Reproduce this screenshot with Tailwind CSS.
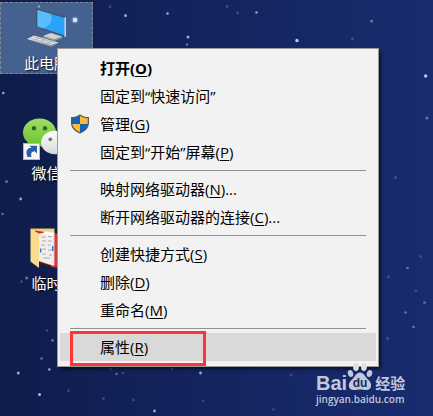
<!DOCTYPE html>
<html lang="zh-CN">
<head>
  <meta charset="UTF-8" />
  <meta name="viewport" content="width=device-width, initial-scale=1" />
  <title>桌面</title>
  <script src="https://cdn.jsdelivr.net/npm/@tailwindcss/browser@4"></script>
</head>
<body class="font-['Open_Sans','Noto_Sans_CJK_SC',sans-serif] text-[15px] text-black">
  <main class="relative min-h-screen overflow-hidden bg-linear-to-r from-[#0f1c4b] via-[#14245f] to-[#182c6e] pt-0.5">

    <!-- stars -->
    <svg class="absolute top-0 left-0" width="433" height="416" viewBox="0 0 433 416" fill="#a9c4ee" aria-hidden="true">
      <g opacity=".85">
        <circle cx="125.500" cy="15.500" r="1.500" />
        <circle cx="167.500" cy="13.500" r="1.300" />
        <circle cx="188" cy="37" r="1.500" />
        <circle cx="256.500" cy="12.500" r="1.200" />
        <circle cx="297" cy="40.500" r="1.700" fill="#d3e6ff" />
        <circle cx="425.700" cy="76" r="1.700" fill="#d3e6ff" />
        <circle cx="39.500" cy="394.500" r="1.500" fill="#c3dcff" />
        <circle cx="18.300" cy="373" r="1.500" />
        <circle cx="49.300" cy="369.500" r="1.300" />
        <circle cx="154.500" cy="411" r="1.400" />
        <circle cx="200.500" cy="373" r="1.400" />
        <circle cx="3.300" cy="93" r="1.300" />
        <circle cx="20.700" cy="199" r="1.400" />
      </g>
      <g opacity=".5">
        <circle cx="371.700" cy="21" r="1.500" />
        <circle cx="427" cy="118" r="1.500" />
        <circle cx="187" cy="44.500" r="1.200" />
        <circle cx="41.500" cy="358.500" r="1.300" />
        <circle cx="52.500" cy="340.500" r="1.400" />
        <circle cx="6.500" cy="181.500" r="1.500" />
        <circle cx="26.700" cy="278" r="1.500" />
        <circle cx="2.500" cy="214" r="1.300" />
        <circle cx="116.500" cy="374" r="1.200" />
        <circle cx="407.500" cy="268" r="1.300" />
        <circle cx="424.500" cy="302.500" r="1.300" />
        <circle cx="405.500" cy="312.500" r="1.200" />
        <circle cx="413.500" cy="327" r="1.300" />
      </g>
      <g opacity=".25">
        <circle cx="110" cy="7" r="1.400" />
        <circle cx="227" cy="6.500" r="1.400" />
        <circle cx="237.500" cy="12.700" r="1.500" />
        <circle cx="352.500" cy="39" r="1.500" />
        <circle cx="21.500" cy="281.500" r="1.500" />
        <circle cx="47" cy="330.500" r="1.400" />
        <circle cx="68.500" cy="391" r="1.400" />
        <circle cx="103.500" cy="398.500" r="1.400" />
        <circle cx="133.500" cy="400" r="1.400" />
        <circle cx="110.500" cy="369" r="1.300" />
        <circle cx="123" cy="373" r="1.300" />
        <circle cx="172" cy="369" r="1.300" />
        <circle cx="203" cy="401" r="1.300" />
        <circle cx="273.500" cy="409.500" r="1.300" />
        <circle cx="395.500" cy="177.500" r="1.500" />
        <circle cx="388.500" cy="277" r="1.400" />
        <circle cx="416" cy="291" r="1.300" />
        <circle cx="420.500" cy="256.500" r="1.300" />
        <circle cx="387.500" cy="338.500" r="1.500" />
        <circle cx="291" cy="375" r="1.400" />
      </g>
    </svg>

    <!-- desktop icons -->
    <nav class="relative flex w-[93px] flex-col gap-[38px] text-white" aria-label="桌面图标">
      <a href="#computer" class="block border border-dashed border-[#7f8794] bg-[#45618f] text-center">
        <svg class="h-[50px] w-full" viewBox="1 3 91 50" aria-hidden="true">
          <circle cx="75" cy="20" r="3.600" fill="#8ebcf0" opacity=".4" />
          <circle cx="75" cy="20" r="2.200" fill="#d9ecff" />
          <circle cx="39" cy="6.500" r="1.200" fill="#a9c4ee" opacity=".7" />
          <path d="M36 8 66 17V37L63.500 36.500 36 27Z" fill="#42546b" />
          <path d="M64 17.500 66 17.500V37L64 36.300Z" fill="#c8d0d6" />
          <path d="M37.500 10 64.500 18V35.500L37.500 26.500Z" fill="#27a4f7" />
          <path d="M37.500 10 51 14C53 21 50 26 43 28.300L37.500 26.500Z" fill="#58bdff" />
          <path d="M43 36 51 33 62 36.500V38L54 40.500Z" fill="#cdd2d3" />
          <path d="M43 36 54 39.300 62 36.500V38L54 40.800 43 37.500Z" fill="#8d979d" />
          <path d="M27 39 34 35.500 58.500 42.500 51 46.500Z" fill="#dfe1df" />
          <path d="M27 39 51 45 58.500 42.500 51 46.500Z" fill="#858b8f" />
          <path d="M31 38.500 52 44M34 37 55 42.600M35 40.500 39 37.500M41 42 45 39.200M47 43.600 51 41" stroke="#a8adaf" stroke-width=".8" />
        </svg>
        <span class="block leading-5 text-shadow-[1px_1px_2px_#000]">此电脑</span>
      </a>
      <a href="#wechat" class="block border border-transparent text-center">
        <svg class="h-[50px] w-full" viewBox="1 113 91 50" aria-hidden="true">
          <defs>
            <linearGradient id="wechat-green" x1="0" y1="0" x2="0" y2="1">
              <stop offset="0" stop-color="#a4dc62" />
              <stop offset="1" stop-color="#66c431" />
            </linearGradient>
            <linearGradient id="wechat-white" x1="0" y1="0" x2="0" y2="1">
              <stop offset="0" stop-color="#fff" />
              <stop offset="1" stop-color="#d4d8da" />
            </linearGradient>
          </defs>
          <ellipse cx="39.500" cy="132.500" rx="16.500" ry="14" fill="url(#wechat-green)" />
          <ellipse cx="34" cy="128.300" rx="2.200" ry="2.300" fill="#246b20" />
          <ellipse cx="45" cy="128.300" rx="2.200" ry="2.300" fill="#246b20" />
          <ellipse cx="55" cy="142.500" rx="14" ry="11.700" fill="url(#wechat-white)" />
          <circle cx="50.300" cy="139.300" r="1.900" fill="#777" />
          <rect x="23.500" y="143.500" width="16" height="16" fill="#f7f7f7" stroke="#b7bbbd" />
          <path d="M27.500 157C25 151 27.500 147.800 31.500 147.800L29.500 145.800H37V153.500L34.800 151.300C31.500 151.500 30.500 154 31.500 157Z" fill="#2b5fae" />
        </svg>
        <span class="block leading-5 text-shadow-[1px_1px_2px_#000]">微信</span>
      </a>
      <a href="#temp" class="block border border-transparent text-center">
        <svg class="h-[50px] w-full" viewBox="1 223 91 50" aria-hidden="true">
          <path d="M30.500 228.500H54.500V262H38Z" fill="#e5bd62" />
          <path d="M31.500 229.500H54V232H36Z" fill="#f2d68b" />
          <path d="M35 230.500 59 234V268L51 267 39 262Z" fill="#d7282f" />
          <path d="M38 234 44 232.500 54 234V266L39 261Z" fill="#f1eeeb" />
          <path d="M44 231.500 54 232.500V236L44 234Z" fill="#fff" />
          <path d="M55 234H60V266H55Z" fill="#d43c3d" />
          <path d="M41 237H46M48 236.500H52M42 241H46M48 241H52M41 245H45M48 245H51M42 249H46M48 250H52M42 254H46M49 255H52M43 258H50" stroke="#9ca0a4" stroke-width=".8" />
          <path d="M39 262 51 265.500V267.500L39 264.500Z" fill="#222" />
          <path d="M54 231.500V265" stroke="#d5d8d8" />
          <path d="M30.500 229 39 233.500V268L30.500 261.500Z" fill="#fbdb8c" />
          <path d="M40 248 41.500 249V252L40 253ZM52 246H53.500V251H52Z" fill="#2d83c5" />
        </svg>
        <span class="block leading-5 text-shadow-[1px_1px_2px_#000]">临时</span>
      </a>
    </nav>

    <!-- context menu -->
    <div role="menu" aria-label="此电脑" class="absolute top-12 right-[54px] left-[57px] border border-[#9b9b9b] bg-[#f2f2f2] px-0.5 py-[5px] shadow-[3px_3px_3px_-1px_rgba(0,0,0,0.6)]">
      <button role="menuitem" class="block h-7 w-full pl-10 text-left font-bold">打开(<u class="underline-offset-2">O</u>)</button>
      <button role="menuitem" class="block h-7 w-full pl-10 text-left">固定到“快速访问”</button>
      <button role="menuitem" class="flex h-7 w-full items-center pl-[10px] text-left">
        <svg class="mr-[10px] h-5 w-5" viewBox="0 0 20 20" aria-hidden="true">
          <path d="M10 .2C7.500 2.200 4.500 3 1 3.100V9C1 14 5 17.500 10 19.700 15 17.500 19 14 19 9V3.100C15.500 3 12.500 2.200 10 .2Z" fill="#555b60" />
          <path d="M10 1.800V10H2.300V4.300C5.400 4.100 7.900 3.300 10 1.800Z" fill="#0c64bd" />
          <path d="M10 1.800V10H17.700V4.300C14.600 4.100 12.100 3.300 10 1.800Z" fill="#ffba34" />
          <path d="M2.400 10H10V18.300C6 16.400 2.900 13.700 2.400 10Z" fill="#ffba34" />
          <path d="M17.600 10H10V18.300C14 16.400 17.100 13.700 17.600 10Z" fill="#0c64bd" />
        </svg>
        <span>管理(<u class="underline-offset-2">G</u>)</span>
      </button>
      <button role="menuitem" class="block h-7 w-full pl-10 text-left">固定到“开始”屏幕(<u class="underline-offset-2">P</u>)</button>
      <hr class="mx-[10px] my-1 border-[#919191]" />
      <button role="menuitem" class="block h-7 w-full pl-10 text-left">映射网络驱动器(<u class="underline-offset-2">N</u>)...</button>
      <button role="menuitem" class="block h-7 w-full pl-10 text-left">断开网络驱动器的连接(<u class="underline-offset-2">C</u>)...</button>
      <hr class="mx-[10px] my-1 border-[#919191]" />
      <button role="menuitem" class="block h-7 w-full pl-10 text-left">创建快捷方式(<u class="underline-offset-2">S</u>)</button>
      <button role="menuitem" class="block h-7 w-full pl-10 text-left">删除(<u class="underline-offset-2">D</u>)</button>
      <button role="menuitem" class="block h-7 w-full pl-10 text-left">重命名(<u class="underline-offset-2">M</u>)</button>
      <hr class="mx-[10px] my-1 border-[#919191]" />
      <div class="relative">
        <button role="menuitem" class="block h-7 w-full bg-[#d9d9d9] pl-10 text-left">属性(<u class="underline-offset-2">R</u>)</button>
        <div class="pointer-events-none absolute -top-0.5 left-[10px] h-[35px] w-[136px] border-3 border-[#ff3535]"></div>
      </div>
    </div>

    <!-- watermark -->
    <div class="absolute top-[362px] left-[316px] text-[#c1c8dd]">
      <div class="flex h-[29px] items-end">
        <span class="font-['Liberation_Sans',sans-serif] text-xl leading-4 font-bold">Bai</span>
        <svg class="h-[29px] w-[26px]" viewBox="0 0 26 29" fill="currentColor" aria-hidden="true">
          <ellipse cx="3.500" cy="11.500" rx="2.700" ry="3.600" transform="rotate(-12 3.500 11.500)" />
          <ellipse cx="9" cy="5" rx="2.900" ry="4" fill="#dde0e8" />
          <ellipse cx="17" cy="5" rx="2.900" ry="4" fill="#dde0e8" transform="rotate(8 17 5)" />
          <ellipse cx="22.500" cy="11.500" rx="2.700" ry="3.600" transform="rotate(15 22.500 11.500)" />
          <path d="M13 10.500C9 10.500 8 15 5 17.500 .5 21 1 27.500 6 28 9 28.300 10.500 27.500 13 27.500S17.500 28.300 20 28C25 27.500 25.500 21 21 17.500 18 15 17 10.500 13 10.500Z" />
          <text x="13" y="25" text-anchor="middle" fill="#1a2961" font-family="Liberation Sans, sans-serif" font-size="12" font-weight="bold">du</text>
        </svg>
        <span class="ml-0.5 text-[15px] leading-4 font-bold">经验</span>
      </div>
      <div class="text-[10px] leading-4 font-semibold">jingyan.baidu.com</div>
    </div>
  </main>
</body>
</html>
